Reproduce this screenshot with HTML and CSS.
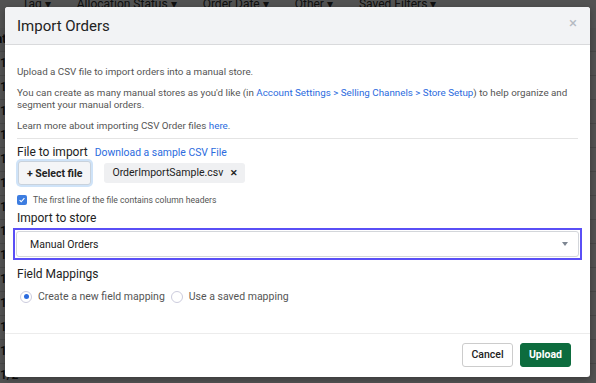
FILE: index.html
```html
<!DOCTYPE html>
<html lang="en">
<head>
    <meta charset="UTF-8">
    <title>Import Orders</title>
    <link rel="stylesheet" href="styles.css">
</head>
<body>

    <!-- Seite hinter dem Dialog -->
    <div class="page">
        <div class="filters">
            <span>Tag &#9662;</span>
            <span>Allocation Status &#9662;</span>
            <span>Order Date &#9662;</span>
            <span>Other &#9662;</span>
            <span>Saved Filters &#9662;</span>
        </div>
        <div class="table">
            <div class="row head">Date</div>
            <div class="row">1/2</div>
            <div class="row">1/2</div>
            <div class="row">1/2</div>
            <div class="row">1/2</div>
            <div class="row">1/2</div>
            <div class="row">1/2</div>
            <div class="row">1/2</div>
            <div class="row">1/2</div>
            <div class="row">1/2</div>
            <div class="row">1/2</div>
            <div class="row">1/2</div>
            <div class="row">1/2</div>
            <div class="row">1/2</div>
            <div class="row">1/2</div>
        </div>
    </div>

    <div class="backdrop"></div>

    <div class="modal">
        <div class="modal-header">
            <h1>Import Orders</h1>
            <span class="close">&times;</span>
        </div>

        <div class="modal-body">
            <p>Upload a CSV file to import orders into a manual store.</p>
            <p>You can create as many manual stores as you'd like (in <a href="#">Account Settings &gt; Selling Channels &gt; Store Setup</a>) to help organize and segment your manual orders.</p>
            <p class="last">Learn more about importing CSV Order files <a href="#">here</a>.</p>

            <hr>

            <div class="label-line">
                <span class="label">File to import</span>
                <a href="#" class="small-link">Download a sample CSV File</a>
            </div>
            <div class="file-line">
                <button class="select-btn">+ Select file</button>
                <span class="chip">OrderImportSample.csv <b>&#10005;</b></span>
            </div>
            <label class="check">
                <span class="box">
                    <svg viewBox="0 0 10 10" width="8" height="8"><path d="M2 5.2l2 2 4-4.4" fill="none" stroke="#fff" stroke-width="1.4"/></svg>
                </span>
                The first line of the file contains column headers
            </label>

            <div class="label">Import to store</div>
            <div class="select-ring">
                <div class="select">
                    <span>Manual Orders</span>
                    <span class="caret"></span>
                </div>
            </div>

            <div class="label">Field Mappings</div>
            <div class="radios">
                <label class="radio"><span class="dot on"></span>Create a new field mapping</label>
                <label class="radio"><span class="dot"></span>Use a saved mapping</label>
            </div>
        </div>

        <div class="modal-footer">
            <button class="btn">Cancel</button>
            <button class="btn primary">Upload</button>
        </div>
    </div>

</body>
</html>
```

FILE: styles.css
```css
/* Grundlayout */
body {
    margin: 0;
    font-family: Roboto, "Liberation Sans", Arial, sans-serif;
    background: #fff;
    color: #222;
    height: 383px;
    overflow: hidden;
    position: relative;
}

/* Seite im Hintergrund */
.page {
    font-size: 12px;
}

.filters {
    display: flex;
    gap: 26px;
    padding: 0 0 0 22px;
    height: 16px;
    line-height: 8px;
    color: #333;
}

.table {
    margin-top: 12px;
}

.row {
    height: 23px;
    line-height: 23px;
    border-bottom: 1px solid #ddd;
    color: #222;
    font-weight: 500;
}

.row.head {
    font-weight: bold;
    background: #f6f6f6;
    margin-left: -12px;
}

.backdrop {
    position: absolute;
    inset: 0;
    background: rgba(0, 0, 0, 0.68);
}

/* Der Dialog */
.modal {
    position: absolute;
    top: 7px;
    left: 5px;
    width: 585px;
    height: 370px;
    background: #fff;
    border-radius: 3px;
    display: flex;
    flex-direction: column;
    overflow: hidden;
    box-shadow: 0 2px 6px rgba(0, 0, 0, 0.3);
}

.modal-header {
    background: #f2f3f5;
    border-bottom: 1px solid #d9dadc;
    height: 37px;
    display: flex;
    align-items: center;
    justify-content: space-between;
    padding: 0 12px;
}

.modal-header h1 {
    margin: 0;
    font-size: 15px;
    font-weight: 400;
    color: #222;
}

.close {
    color: #b5bac2;
    font-size: 15px;
    margin: -6px 1px 0 0;
}

.modal-body {
    flex: 1;
    padding: 21px 12px 0;
    font-size: 9.8px;
    color: #555;
}

.modal-body p {
    margin: 0 0 9px;
    line-height: 12px;
}

.modal-body p.last {
    margin-bottom: 6px;
}

a {
    color: #2b6bde;
    text-decoration: none;
}

hr {
    border: 0;
    border-top: 1px solid #e4e4e4;
    margin: 0 0 6px;
}

.label {
    font-size: 12px;
    color: #222;
}

.label-line {
    display: flex;
    align-items: baseline;
    gap: 7px;
}

.small-link {
    font-size: 10.4px;
}

.file-line {
    display: flex;
    align-items: center;
    gap: 13px;
    margin-top: 2px;
}

.select-btn {
    font-family: inherit;
    font-size: 10.5px;
    font-weight: bold;
    color: #222;
    background: #f4f5f7;
    border: 1px solid #c9d2dc;
    border-radius: 3px;
    height: 24px;
    padding: 0 8px;
    box-shadow: 0 0 0 2px #cfe3f8;
    margin-left: 1px;
}

.chip {
    background: #eff0f2;
    border-radius: 3px;
    height: 20px;
    line-height: 20px;
    padding: 0 7px 0 8px;
    font-size: 10.5px;
    color: #222;
}

.chip b {
    margin-left: 4px;
    font-size: 9px;
}

.check {
    display: flex;
    align-items: center;
    gap: 6px;
    font-size: 8.6px;
    color: #555;
    margin: 10px 0 6px;
}

.box {
    width: 10px;
    height: 10px;
    border-radius: 2px;
    background: #3d7de0;
    display: flex;
    align-items: center;
    justify-content: center;
}

.select-ring {
    margin: 3px -4px 0;
    border: 2px solid #5a4ff6;
    padding: 1px;
}

.select {
    height: 24px;
    border: 1px solid #d3d6da;
    border-radius: 3px;
    display: flex;
    align-items: center;
    justify-content: space-between;
    padding: 0 10px 0 13px;
    font-size: 10.5px;
    color: #222;
}

.caret {
    width: 0;
    height: 0;
    border-left: 3.5px solid transparent;
    border-right: 3.5px solid transparent;
    border-top: 4px solid #7d8692;
}

.select-ring + .label {
    margin-top: 7px;
}

.radios {
    display: flex;
    gap: 6px;
    margin-top: 9px;
    padding-left: 3px;
}

.radio {
    display: flex;
    align-items: center;
    gap: 6px;
    font-size: 10.5px;
    color: #555;
}

.dot {
    width: 10px;
    height: 10px;
    border: 1px solid #ccd;
    border-radius: 50%;
    position: relative;
}

.dot.on::after {
    content: "";
    position: absolute;
    top: 2.5px;
    left: 2.5px;
    width: 5px;
    height: 5px;
    border-radius: 50%;
    background: #2b6bde;
}

.modal-footer {
    border-top: 1px solid #ececec;
    height: 41px;
    margin-bottom: 2px;
    display: flex;
    align-items: center;
    justify-content: flex-end;
    gap: 7px;
    padding: 0 19px 0 0;
}

.btn {
    font-family: inherit;
    font-size: 10.5px;
    font-weight: 500;
    height: 24px;
    width: 51px;
    padding: 0;
    border: 1px solid #ccc;
    border-radius: 3px;
    background: #fff;
    color: #222;
}

.btn.primary {
    background: #0d6c3e;
    border-color: #0d6c3e;
    color: #fff;
    font-weight: bold;
}
```
